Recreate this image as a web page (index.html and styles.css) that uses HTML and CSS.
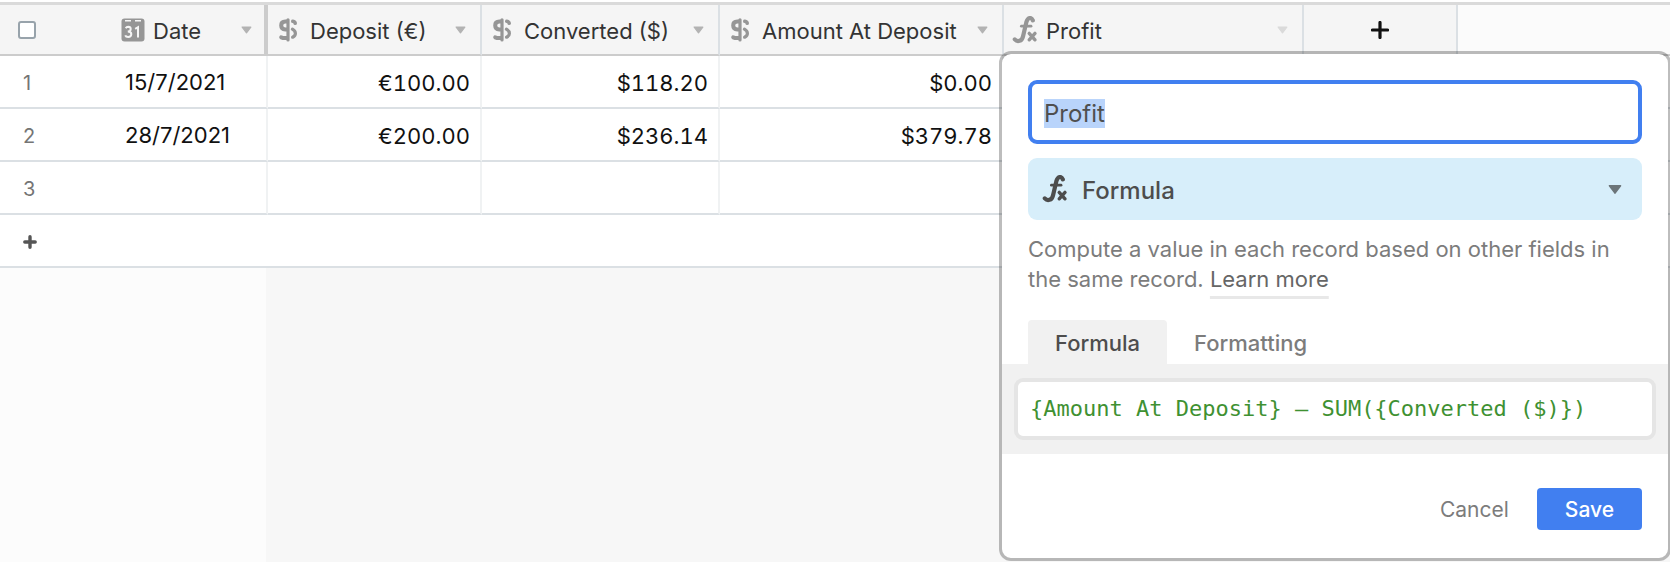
FILE: index.html
```html
<!DOCTYPE html>
<html lang="en">
<head>
<meta charset="utf-8">
<title>Deposits</title>
<link rel="stylesheet" href="styles.css">
</head>
<body>
<svg class="sprite" aria-hidden="true">
  <symbol id="calendar" viewBox="0 0 24 24">
    <rect x="0.5" y="0.5" width="23" height="23" rx="3" fill="currentColor"/>
    <path d="M4 2.7h6M14 2.7h6" stroke="#f5f5f5" stroke-width="1.5"/>
    <path d="M4.7 10.2Q5.5 8.8 7.2 8.8Q9.7 8.9 9.7 11Q9.7 13.4 6.8 13.6Q10.3 13.6 10.3 16.3Q10.2 19 7.2 19Q4.9 19 4.2 17.3M14.2 10.9L17 9.2V19.6" fill="none" stroke="#f5f5f5" stroke-width="2"/>
  </symbol>
  <symbol id="currency" viewBox="0 0 20 24">
    <g fill="none" stroke="currentColor" stroke-linecap="round">
      <path d="M10 1.8V22" stroke-width="3.2"/>
      <path d="M9 3.6H7.4Q3.2 3.8 3.2 7.4T7.4 11.4H9" stroke-width="4"/>
      <path d="M3.2 19.4Q5.5 20.4 9 20" stroke-width="4"/>
      <path d="M14.8 3.2Q17 3.6 17.2 5.2" stroke-width="3.6"/>
      <path d="M14.4 11.2Q17.4 13 17.4 15.4T14.6 19.2" stroke-width="3.2"/>
    </g>
  </symbol>
  <symbol id="fx" viewBox="0 0 26 28">
    <g fill="none" stroke="currentColor" stroke-linecap="round">
      <path d="M20.8 4.4C19.4 1 16 1 14.4 6L11 20.4C9.8 25.4 5.4 26.2 2.8 23.4" stroke-width="4.2"/>
      <path d="M9.4 10.2H19" stroke-width="2.8"/>
      <path d="M17.2 17.4L23 23.8M23 17.4L17.2 23.8" stroke-width="3.4"/>
    </g>
  </symbol>
  <symbol id="caret" viewBox="0 0 14 10">
    <path d="M1.5 1.2H12.5L7 8.6Z" fill="currentColor" stroke="currentColor" stroke-width="1.6" stroke-linejoin="round"/>
  </symbol>
  <symbol id="plus" viewBox="0 0 18 18">
    <path d="M9 1.5V16.5M1.5 9H16.5" fill="none" stroke="currentColor" stroke-width="3.2" stroke-linecap="round"/>
  </symbol>
  <symbol id="plus-bold" viewBox="0 0 14 14">
    <path d="M7 1.8V12.2M1.8 7H12.2" fill="none" stroke="currentColor" stroke-width="3.4" stroke-linecap="round"/>
  </symbol>
</svg>

<main class="grid-view">
  <table class="grid">
    <colgroup>
      <col class="col-check"><col class="col-date"><col class="col-deposit"><col class="col-converted"><col class="col-amount"><col class="col-profit"><col class="col-add"><col>
    </colgroup>
    <thead>
      <tr>
        <th class="select-all"><input type="checkbox" class="check" aria-label="Select all rows"></th>
        <th class="frozen-edge"><div class="field date-field"><svg class="icon-calendar"><use href="#calendar"/></svg><span class="field-name">Date</span><button class="menu" aria-label="Date options"><svg class="icon-caret"><use href="#caret"/></svg></button></div></th>
        <th><div class="field"><svg class="icon-currency"><use href="#currency"/></svg><span class="field-name">Deposit (€)</span><button class="menu" aria-label="Deposit options"><svg class="icon-caret"><use href="#caret"/></svg></button></div></th>
        <th><div class="field"><svg class="icon-currency"><use href="#currency"/></svg><span class="field-name">Converted ($)</span><button class="menu" aria-label="Converted options"><svg class="icon-caret"><use href="#caret"/></svg></button></div></th>
        <th><div class="field"><svg class="icon-currency"><use href="#currency"/></svg><span class="field-name">Amount At Deposit</span><button class="menu" aria-label="Amount options"><svg class="icon-caret"><use href="#caret"/></svg></button></div></th>
        <th><div class="field fx-field"><svg class="icon-fx"><use href="#fx"/></svg><span class="field-name">Profit</span><button class="menu faint" aria-label="Profit options"><svg class="icon-caret"><use href="#caret"/></svg></button></div></th>
        <th><button class="add-field" aria-label="Add field"><svg class="icon-plus"><use href="#plus"/></svg></button></th>
        <th class="rest"></th>
      </tr>
    </thead>
    <tbody>
      <tr><td class="row-number">1</td><td class="date">15/7/2021</td><td class="money">€100.00</td><td class="money">$118.20</td><td class="money">$0.00</td><td></td><td class="blank"></td><td class="blank"></td></tr>
      <tr><td class="row-number">2</td><td class="date">28/7/2021</td><td class="money">€200.00</td><td class="money">$236.14</td><td class="money">$379.78</td><td></td><td class="blank"></td><td class="blank"></td></tr>
      <tr><td class="row-number">3</td><td class="date"></td><td></td><td></td><td></td><td></td><td class="blank"></td><td class="blank"></td></tr>
      <tr><td class="add-row" colspan="8"><button class="add-record" aria-label="Add record"><svg class="icon-plus-small"><use href="#plus-bold"/></svg></button></td></tr>
    </tbody>
  </table>
  <div class="below"><div class="below-frozen"></div></div>

  <form class="popup">
    <div class="top">
      <input class="name" id="name" type="text" value="Profit" aria-label="Field name" autofocus>
      <div class="type">
        <svg class="icon-fx"><use href="#fx"/></svg>
        <select class="type-select" aria-label="Field type"><option>Formula</option></select>
        <svg class="type-caret"><use href="#caret"/></svg>
      </div>
      <p class="description">Compute a value in each record based on other fields in the same record. <a class="learn" href="#">Learn more</a></p>
      <div class="tabs" role="tablist">
        <button class="tab active" type="button" role="tab" aria-selected="true">Formula</button>
        <button class="tab" type="button" role="tab" aria-selected="false">Formatting</button>
      </div>
    </div>
    <div class="editor">
      <textarea class="formula" rows="1" spellcheck="false" aria-label="Formula">{Amount At Deposit} – SUM({Converted ($)})</textarea>
    </div>
    <div class="actions">
      <button class="cancel" type="button">Cancel</button>
      <button class="save" type="button">Save</button>
    </div>
  </form>
</main>
<script src="script.js"></script>
</body>
</html>
```
FILE: styles.css
```css
* {
  box-sizing: border-box;
}

html,
body {
  height: 100%;
}

body {
  margin: 0;
  overflow: hidden;
  background: #fff;
  color: #333;
  font-family: Inter, "Liberation Sans", sans-serif;
  font-size: 22px;
}

button,
input,
select,
textarea {
  margin: 0;
  padding: 0;
  border: 0;
  background: none;
  color: inherit;
  font: inherit;
  outline: none;
}

button {
  cursor: pointer;
}

svg {
  display: block;
  flex: none;
}

.sprite {
  position: absolute;
  width: 0;
  height: 0;
}

.grid-view {
  position: relative;
  display: flex;
  flex-direction: column;
  min-height: 100%;
  padding-top: 2px;
}

/* Table */
.grid {
  width: 100%;
  table-layout: fixed;
  border-collapse: separate;
  border-spacing: 0;
  border-top: 3px solid #dadada;
}

.col-check { width: 112px; }
.col-date { width: 156px; }
.col-deposit { width: 214px; }
.col-converted { width: 238px; }
.col-amount { width: 284px; }
.col-profit { width: 300px; }
.col-add { width: 154px; }

th {
  height: 51px;
  padding: 0;
  background: #f5f5f5;
  border-right: 2px solid #dbe0e4;
  border-bottom: 2px solid #ccc;
  font-weight: 400;
  text-align: left;
}

th.select-all {
  padding-left: 18px;
  border-right: 0;
}

th.frozen-edge {
  border-right: 4px solid #ccc;
}

th.rest {
  background: #fbfbfb;
  border-right: 0;
}

.check {
  display: block;
  width: 18px;
  height: 18px;
  appearance: none;
  background: #fff;
  border: 2px solid #98a3ab;
  border-radius: 3px;
}

.field {
  display: flex;
  align-items: center;
  padding: 0 14px 0 10px;
  line-height: 28px;
  white-space: nowrap;
}

.date-field {
  padding: 0 12px 0 9px;
}

.fx-field {
  padding: 0 14px 0 8px;
}

.field-name {
  flex: 1;
  padding-top: 2px;
  font-size: 22px;
}

.icon-calendar {
  width: 24px;
  height: 24px;
  margin-right: 8px;
  color: #969696;
}

.icon-currency {
  width: 20px;
  height: 24px;
  margin-right: 12px;
  color: #969696;
}

.icon-fx {
  width: 26px;
  height: 28px;
  color: #969696;
}

.fx-field .icon-fx {
  margin-right: 8px;
}

.icon-caret {
  width: 11px;
  height: 8px;
}

.menu {
  color: #b3b3b3;
}

.menu.faint {
  color: #dadada;
}

.add-field {
  display: block;
  margin: 0 auto;
  color: #111;
}

.icon-plus {
  width: 18px;
  height: 18px;
}

td {
  height: 53px;
  padding: 2px 0 0;
  background: #fff;
  border-right: 2px solid #f0f2f3;
  border-bottom: 2px solid #dbe0e4;
  color: #111;
  font-size: 22px;
  line-height: 28px;
}

td.row-number {
  padding-left: 23px;
  border-right: 0;
  color: #757575;
  font-size: 20px;
}

td.date {
  padding: 0 0 0 13px;
}

td.money {
  padding-right: 10px;
  font-variant-numeric: tabular-nums;
  text-align: right;
}

td.blank {
  border-right: 0;
}

td.add-row {
  padding-left: 23px;
  border-right: 0;
}

.add-record {
  display: block;
  color: #555;
}

.icon-plus-small {
  width: 14px;
  height: 14px;
}

.below {
  flex: 1;
  display: flex;
  background: #f7f7f7;
}

.below-frozen {
  width: 266px;
  background: #fcfcfc;
}

/* Field editor */
.popup {
  position: absolute;
  top: 51px;
  left: 999px;
  right: -1px;
  background: #fff;
  background-clip: padding-box;
  border: 3px solid rgba(0, 0, 0, 0.26);
  border-radius: 12px;
}

.top {
  display: flex;
  flex-direction: column;
  padding: 26px 26px 0;
}

.name {
  width: 100%;
  height: 64px;
  padding: 2px 12px 0;
  background: #fff;
  border: 4px solid #417ff0;
  border-radius: 9px;
  color: #4f4f4f;
  font-size: 24px;
}

.name::selection {
  background: #b9d4fb;
  color: #4f4f4f;
}

.type {
  position: relative;
  display: flex;
  align-items: center;
  height: 62px;
  margin-top: 14px;
  padding-left: 14px;
  background: #d7eefa;
  border-radius: 9px;
}

.type .icon-fx {
  color: #4d4d4d;
}

.type-select {
  flex: 1;
  height: 100%;
  padding: 2px 0 0 14px;
  appearance: none;
  color: #4d4d4d;
  font-size: 24px;
  font-weight: 500;
}

.type-caret {
  position: absolute;
  right: 20px;
  width: 14px;
  height: 11px;
  color: #6c7579;
  pointer-events: none;
}

.description {
  margin: 14px 0 0;
  color: #7c7c7c;
  font-size: 22px;
  line-height: 30px;
}

.learn {
  color: #666;
  text-decoration: underline 3px #e8e8e8;
  text-decoration-skip-ink: none;
  text-underline-offset: 9px;
}

.tabs {
  display: flex;
  margin-top: 26px;
}

.tab {
  height: 44px;
  padding: 2px 27px 0;
  border-radius: 4px 4px 0 0;
  color: #7c7c7c;
  font-size: 22px;
  font-weight: 500;
}

.tab.active {
  background: #f1f1f1;
  color: #4d4d4d;
}

.editor {
  padding: 14px 12px;
  background: #f1f1f1;
}

.formula {
  display: block;
  width: 100%;
  height: 62px;
  padding: 12px;
  overflow: hidden;
  resize: none;
  background: #fff;
  border: 4px solid #e5e5e5;
  border-radius: 9px;
  color: #3f9132;
  font-family: "DejaVu Sans Mono", monospace;
  font-size: 22px;
  line-height: 30px;
}

.actions {
  display: flex;
  justify-content: flex-end;
  align-items: center;
  gap: 28px;
  padding: 34px 26px 28px;
}

.cancel {
  color: #7c7c7c;
  font-size: 21px;
}

.save {
  height: 42px;
  padding: 0 28px;
  background: #417ff0;
  border-radius: 4px;
  color: #fff;
  font-size: 21px;
  font-weight: 500;
}
```
FILE: script.js
```js
document.getElementById("name").select();
```
